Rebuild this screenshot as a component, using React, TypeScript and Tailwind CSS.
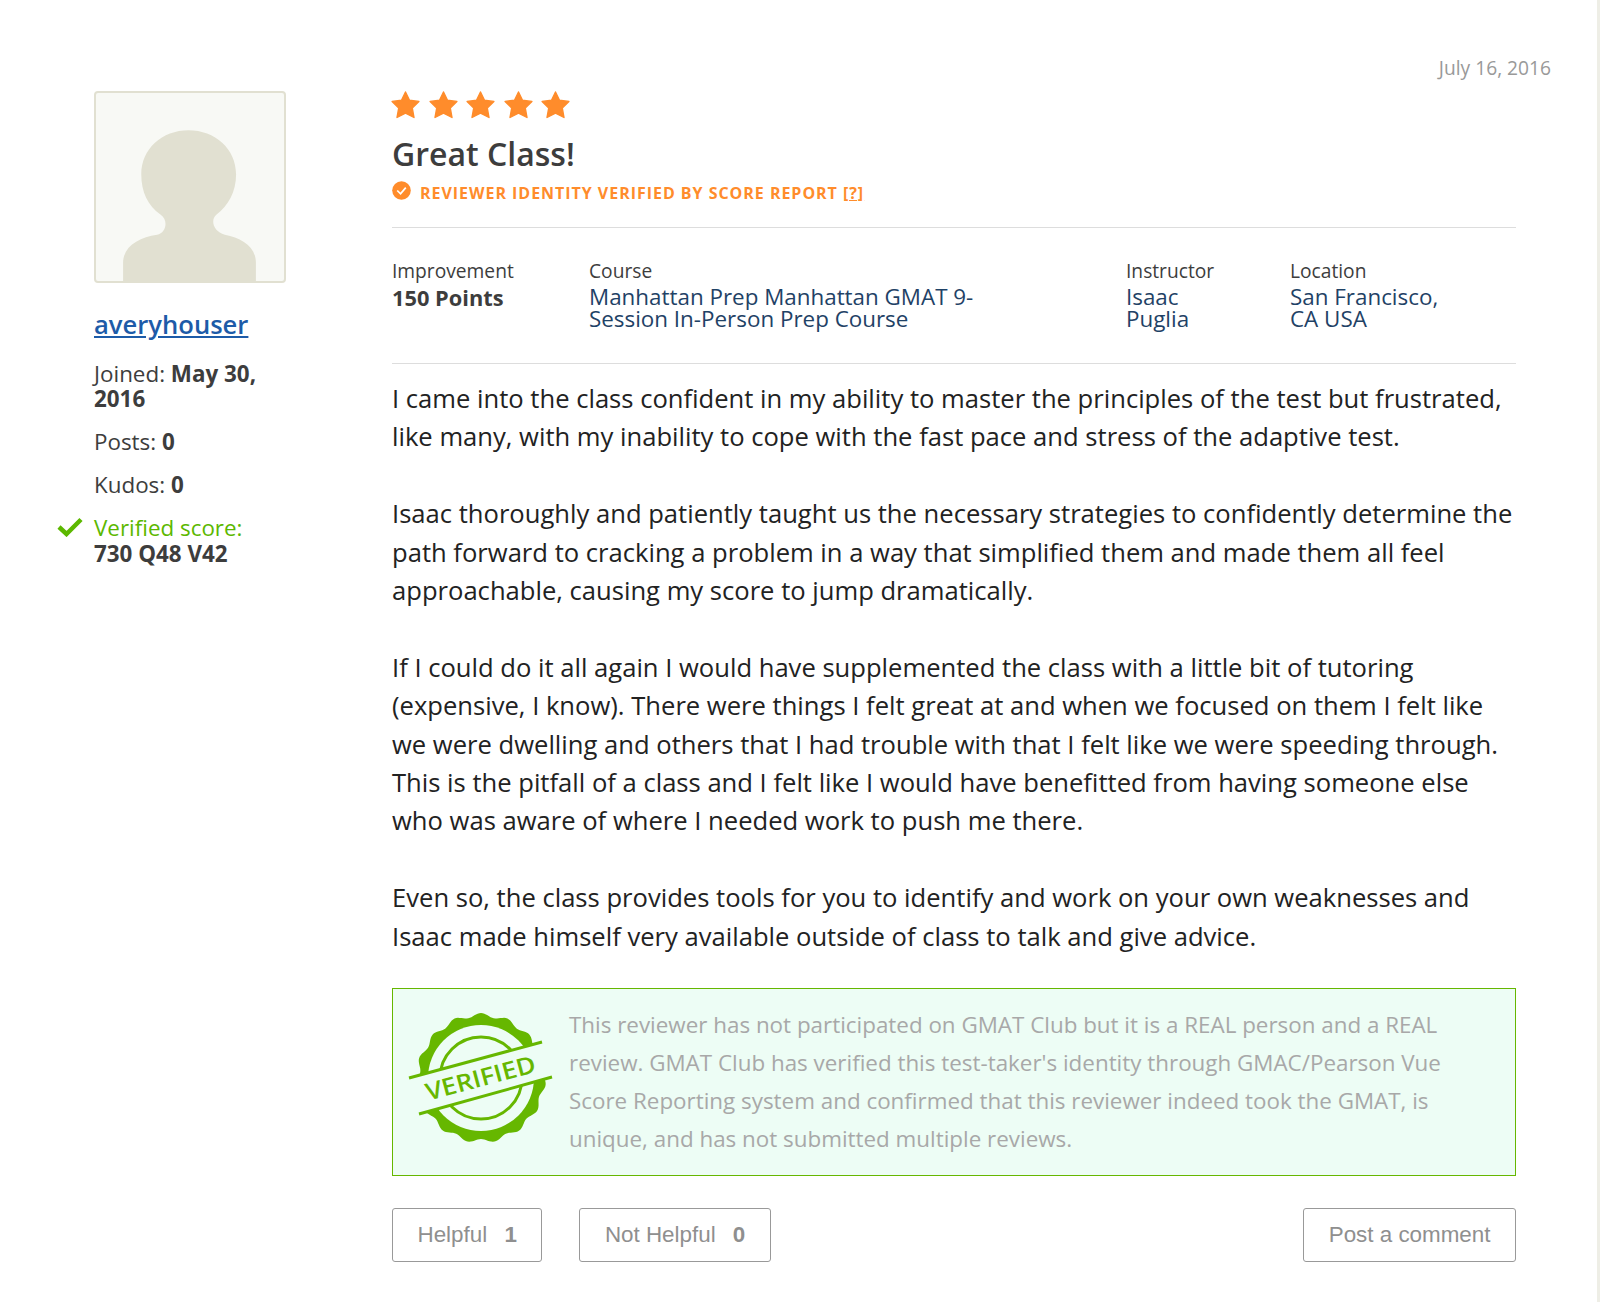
const openSans = "font-['Open_Sans',sans-serif]";

function Star() {
  return (
    <svg viewBox="0 0 28 28" className="w-[29px] h-[28px]">
      <path
        d="M14 1 L18 9.2 L27.4 10.4 L20.8 17 L22.5 26.5 L14 22.2 L5.5 26.5 L7.2 17 L0.6 10.4 L10 9.2 Z"
        fill="#ff8c2b"
        stroke="#ff8c2b"
        strokeWidth="1.4"
        strokeLinejoin="round"
      />
    </svg>
  );
}

function Avatar() {
  return (
    <div className="w-[192px] h-[192px] shrink-0 rounded-[4px] border-2 border-[#e1e0d1] bg-[#f8f9f5] overflow-hidden">
      <svg viewBox="165 66 569 569" className="w-full h-full block">
        <path
          d="M247 640 V580 C247 530 295 503 350 495 C378 490 385 450 360 434 C322 408 302 365 302 313 C302 235 365 179 445 179 C525 179 589 235 589 313 C589 365 565 408 530 434 C510 450 520 485 555 495 C605 505 649 530 649 580 V640 Z"
          fill="#e1e0d1"
        />
      </svg>
    </div>
  );
}

// wavy outer edge of the stamp
const wavy = Array.from({ length: 240 }, (_, i) => {
  const a = (i / 240) * Math.PI * 2;
  const r = 63 + 2 * Math.sin(a * 15);
  return `${(73 + r * Math.cos(a)).toFixed(2)},${(66 + r * Math.sin(a)).toFixed(2)}`;
}).join(" ");

function VerifiedStamp() {
  return (
    <svg viewBox="0 0 146 140" className="w-[146px] h-[140px] shrink-0">
      <polygon points={wavy} fill="#66b700" />
      <circle cx="73" cy="66" r="53" fill="#edfdf5" />
      <circle cx="73" cy="66" r="41" fill="none" stroke="#66b700" strokeWidth="3" />
      <polygon points="1,66 134,30 144,65 11,102" fill="#edfdf5" />
      <line x1="1" y1="66" x2="134" y2="30" stroke="#66b700" strokeWidth="3" />
      <line x1="11" y1="102" x2="144" y2="65" stroke="#66b700" strokeWidth="3" />
      <text
        x="72.5"
        y="74.5"
        textAnchor="middle"
        transform="rotate(-15 72.5 66)"
        fill="#66b700"
        fontFamily="'Open Sans', sans-serif"
        fontWeight="600"
        fontSize="24"
        textLength="113"
        lengthAdjust="spacingAndGlyphs"
      >
        VERIFIED
      </text>
    </svg>
  );
}

function Sidebar() {
  return (
    <div className="w-[392px] shrink-0 pl-[94px] pr-[90px] text-[22.4px] leading-[25px] text-[#3d3d3d]">
      <Avatar />
      <a className="block mt-[24px] text-[25.6px] leading-[35px] font-semibold text-[#1d5ba8] underline">averyhouser</a>
      <p className="mt-[19px]">
        Joined: <b>May 30, 2016</b>
      </p>
      <p className="mt-[18px]">
        Posts: <b>0</b>
      </p>
      <p className="mt-[18px]">
        Kudos: <b>0</b>
      </p>
      <div className="relative mt-[18px] leading-[26px]">
        <svg viewBox="0 0 26 20" className="absolute left-[-37px] top-[2px] w-[26px] h-[20px]">
          <path d="M2 10 L9.5 17 L24 2.5" fill="none" stroke="#5cb800" strokeWidth="4.5" />
        </svg>
        <p className="text-[#5cb800]">Verified score:</p>
        <p className="font-bold">730 Q48 V42</p>
      </div>
    </div>
  );
}

function Detail({ label, width, children }: { label: string; width: string; children: React.ReactNode }) {
  return (
    <div className={width}>
      <div className="text-[19.2px] leading-[26px] text-[#3d3d3d]">{label}</div>
      {children}
    </div>
  );
}

function Details() {
  const value = "mt-[2px] text-[22.4px] leading-[22px] text-[#1f4266]";
  return (
    <div className="mt-[24px] flex h-[137px] border-y border-[#dddddd] pt-[30px]">
      <Detail label="Improvement" width="w-[197px]">
        <div className="text-[21.8px] leading-[27px] font-bold text-[#3d3d3d]">150 Points</div>
      </Detail>
      <Detail label="Course" width="w-[537px]">
        <div className={`${value} w-[400px]`}>Manhattan Prep Manhattan GMAT 9- Session In-Person Prep Course</div>
      </Detail>
      <Detail label="Instructor" width="w-[164px]">
        <div className={`${value} w-[100px]`}>Isaac Puglia</div>
      </Detail>
      <Detail label="Location" width="flex-1">
        <div className={`${value} w-[170px]`}>San Francisco, CA USA</div>
      </Detail>
    </div>
  );
}

function Button({ children }: { children: React.ReactNode }) {
  return (
    <button className="h-[54px] rounded-[3px] border border-[#999999] px-[24.5px] text-[22.4px] text-[#8f8f8f] font-['Liberation_Sans',sans-serif]">
      {children}
    </button>
  );
}

export default function App() {
  return (
    <div className={`${openSans} relative min-h-[1302px] bg-white border-r-[3px] border-[#eeeee6] pt-[56px]`}>
      <div className="h-[24px] pr-[46px] text-right text-[19.2px] leading-[24px] text-[#999999]">July 16, 2016</div>
      <div className="flex mt-[11px] pr-[81px]">
        <Sidebar />
        <div className="flex-1 min-w-0">
          <div className="flex gap-[8.5px] -ml-px">
            <Star />
            <Star />
            <Star />
            <Star />
            <Star />
          </div>
          <h1 className="mt-[13px] text-[32px] leading-[44px] font-semibold text-[#3d3d3d]">Great Class!</h1>
          <div className="mt-[7px] flex items-center gap-[9px] text-[16px] leading-[20px] font-bold tracking-[0.97px] text-[#ff8c2b]">
            <svg viewBox="0 0 20 20" className="w-[19px] h-[19px] -mt-[6px]">
              <circle cx="10" cy="10" r="9.8" fill="#ff8c2b" />
              <path d="M5.5 10 L9 13.5 L14.5 7" fill="none" stroke="#ffffff" strokeWidth="1.8" />
            </svg>
            <span>
              REVIEWER IDENTITY VERIFIED BY SCORE REPORT <span className="underline">[?]</span>
            </span>
          </div>
          <Details />
          <div className="mt-[16px] text-[25.6px] leading-[38.4px] text-[#222222]">
            <p>
              I came into the class confident in my ability to master the principles of the test but frustrated, like
              many, with my inability to cope with the fast pace and stress of the adaptive test.
            </p>
            <p className="mt-[38.4px]">
              Isaac thoroughly and patiently taught us the necessary strategies to confidently determine the path
              forward to cracking a problem in a way that simplified them and made them all feel approachable, causing
              my score to jump dramatically.
            </p>
            <p className="mt-[38.4px]">
              If I could do it all again I would have supplemented the class with a little bit of tutoring (expensive,
              I know). There were things I felt great at and when we focused on them I felt like we were dwelling and
              others that I had trouble with that I felt like we were speeding through. This is the pitfall of a class
              and I felt like I would have benefitted from having someone else who was aware of where I needed work to
              push me there.
            </p>
            <p className="mt-[38.4px]">
              Even so, the class provides tools for you to identify and work on your own weaknesses and Isaac made
              himself very available outside of class to talk and give advice.
            </p>
          </div>
          <div className="mt-[32px] flex h-[188px] items-center gap-[15px] border border-[#66b700] bg-[#edfdf5] pl-[15px]">
            <VerifiedStamp />
            <p className="w-[900px] text-[22.4px] leading-[38px] text-[#a8a8a8]">
              This reviewer has not participated on GMAT Club but it is a REAL person and a REAL review. GMAT Club has
              verified this test-taker's identity through GMAC/Pearson Vue Score Reporting system and confirmed that
              this reviewer indeed took the GMAT, is unique, and has not submitted multiple reviews.
            </p>
          </div>
          <div className="mt-[32px] flex gap-[37px]">
            <Button>
              Helpful <b className="ml-[11px]">1</b>
            </Button>
            <Button>
              Not Helpful <b className="ml-[11px]">0</b>
            </Button>
            <div className="ml-auto">
              <Button>Post a comment</Button>
            </div>
          </div>
        </div>
      </div>
    </div>
  );
}
